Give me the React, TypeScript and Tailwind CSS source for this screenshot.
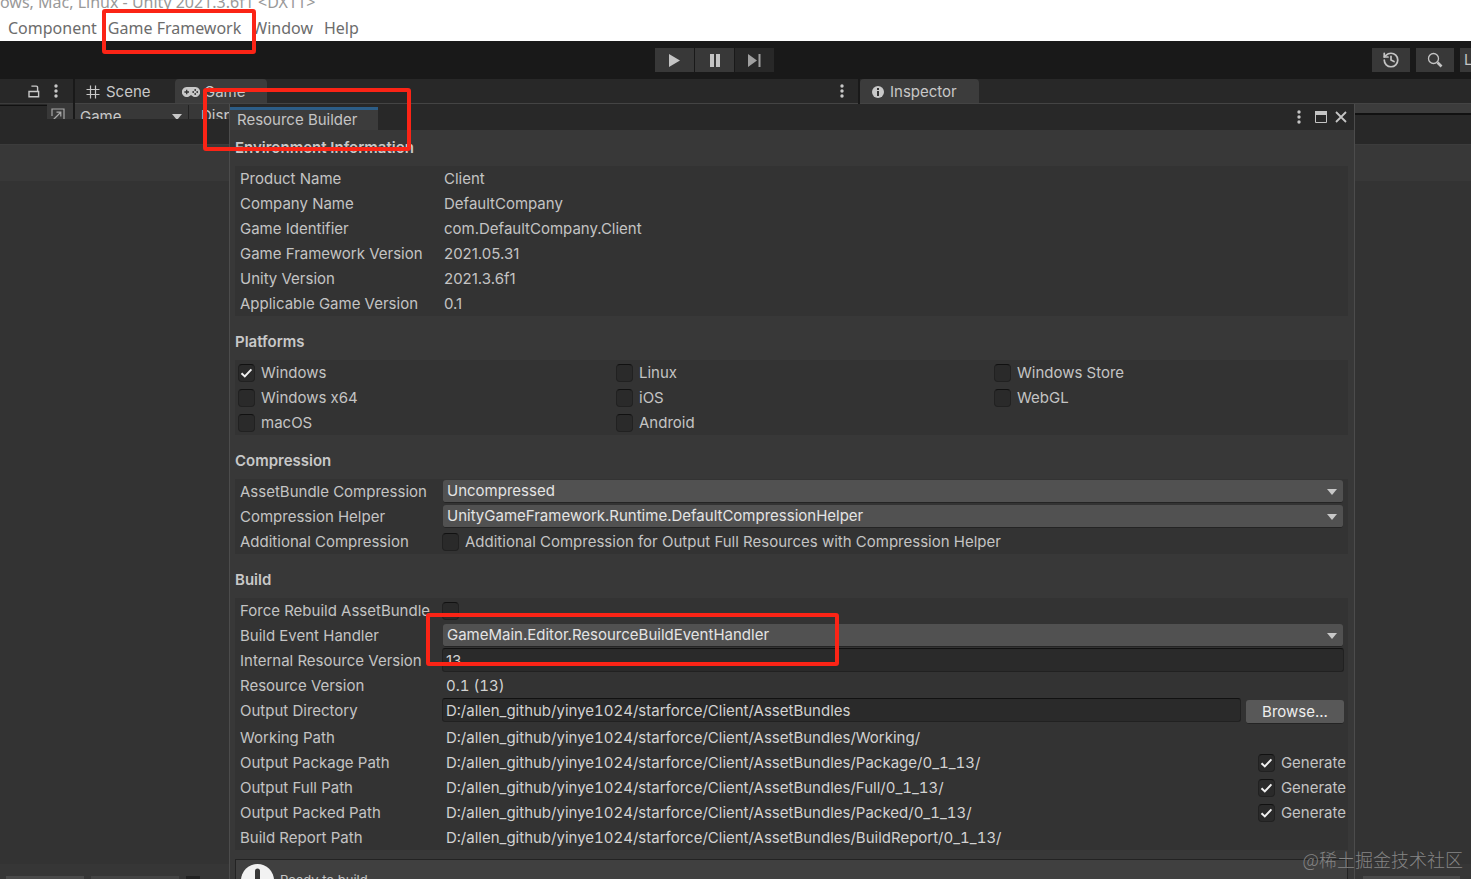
import type { ReactNode } from "react";
import { History } from "lucide-react";

const ROOT = "D:/allen_github/yinye1024/starforce/Client/AssetBundles";

const environment = [
  { label: "Product Name", value: "Client" },
  { label: "Company Name", value: "DefaultCompany" },
  { label: "Game Identifier", value: "com.DefaultCompany.Client" },
  { label: "Game Framework Version", value: "2021.05.31" },
  { label: "Unity Version", value: "2021.3.6f1" },
  { label: "Applicable Game Version", value: "0.1" },
];

const platforms = [
  { name: "Windows", checked: true },
  { name: "Windows x64", checked: false },
  { name: "macOS", checked: false },
  { name: "Linux", checked: false },
  { name: "iOS", checked: false },
  { name: "Android", checked: false },
  { name: "Windows Store", checked: false },
  { name: "WebGL", checked: false },
];

const paths = [
  { label: "Working Path", value: `${ROOT}/Working/`, generate: false },
  { label: "Output Package Path", value: `${ROOT}/Package/0_1_13/`, generate: true },
  { label: "Output Full Path", value: `${ROOT}/Full/0_1_13/`, generate: true },
  { label: "Output Packed Path", value: `${ROOT}/Packed/0_1_13/`, generate: true },
  { label: "Build Report Path", value: `${ROOT}/BuildReport/0_1_13/`, generate: false },
];

function DotsIcon() {
  return (
    <svg width="4" height="14" viewBox="0 0 4 14" fill="currentColor" aria-hidden="true">
      <circle cx="2" cy="2" r="1.7" />
      <circle cx="2" cy="7" r="1.7" />
      <circle cx="2" cy="12" r="1.7" />
    </svg>
  );
}

function LockIcon() {
  return (
    <svg width="12" height="13" viewBox="0 0 12 13" fill="none" stroke="currentColor" strokeWidth="1.4" aria-hidden="true">
      <path d="M1 6.5h9.6v5.3H1zM9.6 6.5V2.6c0-.9-.5-1.5-1.4-1.5H3.4" />
    </svg>
  );
}

function HashIcon() {
  return (
    <svg width="14" height="14" viewBox="0 0 14 14" stroke="currentColor" strokeWidth="1.2" aria-hidden="true">
      <path d="M4.5 0.5v13M9.5 0.5v13M0.5 4.5h13M0.5 9.5h13" />
    </svg>
  );
}

function GamepadIcon() {
  return (
    <svg width="18" height="10" viewBox="0 0 18 10" aria-hidden="true">
      <path d="M5 0a5 5 0 1 0 3.6 8.3h.8A5 5 0 1 0 13 0z" fill="currentColor" />
      <path d="M4.7 2.7v4.6M2.4 5H7" stroke="#333" strokeWidth="1.3" />
      <circle cx="13.2" cy="3" r="0.9" fill="#333" />
      <circle cx="15.2" cy="5" r="0.9" fill="#333" />
      <circle cx="13.2" cy="7" r="0.9" fill="#333" />
      <circle cx="11.2" cy="5" r="0.9" fill="#333" />
    </svg>
  );
}

function ArrowDown() {
  return (
    <svg width="10" height="6" viewBox="0 0 10 6" fill="#c8c8c8" aria-hidden="true">
      <path d="M0 0h10L5 6z" />
    </svg>
  );
}

function Check({ id, label, checked = false }: { id: string; label?: string; checked?: boolean }) {
  return (
    <span className="flex h-[25px] items-center gap-1.5 leading-[25px]">
      <span className="relative flex">
        <input
          id={id}
          type="checkbox"
          defaultChecked={checked}
          className="peer h-[18px] w-[17px] appearance-none rounded-sm border border-[#212121] border-t-[#111] bg-[#2a2a2a]"
        />
        <svg
          className="pointer-events-none absolute top-1 left-0.5 hidden peer-checked:block"
          width="13"
          height="10"
          viewBox="0 0 13 10"
          fill="none"
          stroke="#f0f0f0"
          strokeWidth="2"
          aria-hidden="true"
        >
          <path d="M1.5 5.2 4.8 8.4 11.4 1.4" />
        </svg>
      </span>
      {label && <label htmlFor={id}>{label}</label>}
    </span>
  );
}

function Dropdown({ id, value }: { id: string; value: string }) {
  return (
    <div className="relative mx-px mt-px flex-1">
      <select
        id={id}
        className="block h-[23px] w-full appearance-none rounded-[3px] border-b border-[#242424] bg-[#515151] pr-6 pl-1 leading-5 text-[#e4e4e4]"
      >
        <option>{value}</option>
      </select>
      <span className="pointer-events-none absolute top-[9px] right-1.5">
        <ArrowDown />
      </span>
    </div>
  );
}

function Section({ title, children }: { title: string; children: ReactNode }) {
  return (
    <section className="mb-[14px]">
      <h2 className="mb-1.5 leading-6 font-semibold text-[#c8c8c8]">{title}</h2>
      <div className="bg-[#333] pr-1 pl-[5px]">{children}</div>
    </section>
  );
}

function Row({ label, htmlFor, children }: { label: string; htmlFor?: string; children: ReactNode }) {
  return (
    <div className="flex min-h-[25px] items-start leading-[25px]">
      {htmlFor ? (
        <label htmlFor={htmlFor} className="w-[202px] shrink-0 whitespace-nowrap">{label}</label>
      ) : (
        <span className="w-[202px] shrink-0 whitespace-nowrap">{label}</span>
      )}
      {children}
    </div>
  );
}

function MenuBar() {
  return (
    <header className="h-[41px] overflow-hidden bg-white font-['Noto_Sans','Open_Sans',sans-serif] text-base whitespace-nowrap">
      <div className="-mt-2 h-5 leading-5 text-[#999]">ows, Mac, Linux - Unity 2021.3.6f1 &lt;DX11&gt;</div>
      <nav className="flex gap-[11px] pt-1 pl-2 leading-6 text-[#6c6c6c]">
        <button>Component</button>
        <button>Game Framework</button>
        <button>Window</button>
        <button>Help</button>
      </nav>
    </header>
  );
}

function Toolbar() {
  return (
    <div className="flex h-[38px] items-start bg-[#191919] pt-[7px]">
      <div className="flex-[655]" />
      <div className="flex gap-px">
        <button aria-label="Play" className="flex h-6 w-[39px] items-center justify-center bg-[#383838]">
          <svg width="11" height="13" viewBox="0 0 11 13" fill="#c4c4c4"><path d="M0 0l11 6.5L0 13z" /></svg>
        </button>
        <button aria-label="Pause" className="flex h-6 w-[39px] items-center justify-center bg-[#383838]">
          <svg width="10" height="13" viewBox="0 0 10 13" fill="#c4c4c4"><path d="M0 0h4v13H0zM6 0h4v13H6z" /></svg>
        </button>
        <button aria-label="Step" className="flex h-6 w-[39px] items-center justify-center bg-[#282828]">
          <svg width="13" height="13" viewBox="0 0 13 13" fill="#a0a0a0"><path d="M0 0l9 6.5L0 13zM10.5 0h2v13h-2z" /></svg>
        </button>
      </div>
      <div className="flex flex-[697] justify-end gap-1.5 text-[#c4c4c4]">
        <button aria-label="Undo history" className="flex h-6 w-[38px] items-center justify-center bg-[#383838]">
          <History size={18} strokeWidth={2.3} />
        </button>
        <button aria-label="Search" className="flex h-6 w-[38px] items-center justify-center bg-[#383838]">
          <svg width="16" height="16" viewBox="0 0 16 16" fill="none" stroke="currentColor">
            <circle cx="6.5" cy="6.5" r="5" strokeWidth="1.3" />
            <path d="M10.5 10.5l4 4" strokeWidth="2.6" />
          </svg>
        </button>
        <button className="h-6 w-[11px] overflow-hidden bg-[#383838] pl-1 text-left text-[15px] leading-6">L</button>
      </div>
    </div>
  );
}

function Docks() {
  return (
    <div className="flex h-10 gap-[2px] overflow-hidden bg-[#191919] text-[#c8c8c8]">
      <div className="w-[73px] bg-[#282828]">
        <div className="flex h-6 items-center justify-end gap-[14px] pr-[15px]">
          <LockIcon />
          <DotsIcon />
        </div>
        <div className="flex h-4 items-start justify-end border-t border-[#3c3c3c] bg-[#282828]">
          <div className="mt-px h-4 flex-1 border-t border-[#111]" />
          <div className="flex h-4 w-[26px] items-start bg-[#383838] pt-1 pl-1">
            <svg width="14" height="14" viewBox="0 0 14 14" fill="none" stroke="#a8a8a8" strokeWidth="1.2" aria-hidden="true">
              <path d="M1 8V1h12v12H8M4 10l5.5-5.5M5.5 4.2h4.3v4.3M1 13l3-3" />
            </svg>
          </div>
        </div>
      </div>

      <div className="flex-[783] overflow-hidden bg-[#282828]">
        <div className="flex h-6 items-center leading-6">
          <div className="flex h-6 w-[100px] items-center gap-1.5 pt-0.5 pl-[11px]">
            <HashIcon />
            Scene
          </div>
          <div className="flex h-6 w-[92px] items-center gap-1 rounded-t-sm bg-[#3c3c3c] pt-0.5 pl-[7px]">
            <GamepadIcon />
            Game
          </div>
          <div className="ml-auto pr-[14px]">
            <DotsIcon />
          </div>
        </div>
        <div className="flex h-[26px] items-center border-t border-[#444] bg-[#383838] pl-px">
          <div className="relative w-[113px] border-r border-[#222]">
            <select aria-label="View" className="block w-full appearance-none pl-1 leading-6">
              <option>Game</option>
            </select>
            <span className="pointer-events-none absolute top-[9px] right-1.5">
              <ArrowDown />
            </span>
          </div>
          <span className="pl-3">Display 1</span>
        </div>
      </div>

      <div className="flex-[611] bg-[#282828]">
        <div className="flex h-6 leading-6">
          <div className="flex h-6 w-[119px] items-center gap-1.5 rounded-t-sm bg-[#3c3c3c] pt-0.5 pl-3">
            <svg width="12" height="12" viewBox="0 0 12 12" aria-hidden="true">
              <circle cx="6" cy="6" r="6" fill="#c8c8c8" />
              <path d="M6 2v2M6 5v5" stroke="#333" strokeWidth="2" />
            </svg>
            Inspector
          </div>
        </div>
        <div className="h-3 border-t border-b-2 border-t-[#444] border-b-[#111] bg-[#3c3c3c]" />
      </div>
    </div>
  );
}

function ResourceBuilder() {
  return (
    <main className="absolute top-[104px] right-[116px] left-[229px] h-[900px] border-r border-l border-[#4c4c4c] bg-[#383838] text-[#c4c4c4]">
      <div className="flex h-[26px] items-end justify-between bg-[#282828]">
        <div className="h-[23px] w-[148px] border-t-3 border-[#2c5d87] bg-[#3c3c3c] pl-[7px] leading-5">
          Resource Builder
        </div>
        <div className="flex h-[26px] items-center gap-2 pr-[7px]">
          <button aria-label="Window menu" className="mr-1.5"><DotsIcon /></button>
          <button aria-label="Maximize">
            <svg width="12" height="12" viewBox="0 0 12 12" fill="none" stroke="currentColor">
              <path d="M.5.5h11v11H.5z" />
              <path d="M0 2h12" strokeWidth="4" />
            </svg>
          </button>
          <button aria-label="Close">
            <svg width="12" height="12" viewBox="0 0 12 12" stroke="currentColor" strokeWidth="1.8">
              <path d="M1 1l10 10M11 1L1 11" />
            </svg>
          </button>
        </div>
      </div>

      <div className="pt-1.5 pr-1.5 pl-[5px]">
        <Section title="Environment Information">
          {environment.map((item) => (
            <Row key={item.label} label={item.label}>
              <span className="pl-0.5">{item.value}</span>
            </Row>
          ))}
        </Section>

        <Section title="Platforms">
          <div className="-ml-0.5 grid grid-flow-col grid-cols-3 grid-rows-3 gap-x-7">
            {platforms.map((platform) => (
              <Check key={platform.name} id={platform.name} label={platform.name} checked={platform.checked} />
            ))}
          </div>
        </Section>

        <Section title="Compression">
          <Row label="AssetBundle Compression" htmlFor="bundle-compression">
            <Dropdown id="bundle-compression" value="Uncompressed" />
          </Row>
          <Row label="Compression Helper" htmlFor="compression-helper">
            <Dropdown id="compression-helper" value="UnityGameFramework.Runtime.DefaultCompressionHelper" />
          </Row>
          <Row label="Additional Compression">
            <Check id="additional" label="Additional Compression for Output Full Resources with Compression Helper" />
          </Row>
        </Section>

        <Section title="Build">
          <Row label="Force Rebuild AssetBundle" htmlFor="force-rebuild">
            <Check id="force-rebuild" />
          </Row>
          <Row label="Build Event Handler" htmlFor="event-handler">
            <Dropdown id="event-handler" value="GameMain.Editor.ResourceBuildEventHandler" />
          </Row>
          <Row label="Internal Resource Version" htmlFor="resource-version">
            <input
              id="resource-version"
              defaultValue="13"
              className="h-6 flex-1 rounded-[3px] border border-[#212121] border-t-[#111] bg-[#2a2a2a] px-[3px] text-[#d2d2d2]"
            />
          </Row>
          <Row label="Resource Version">
            <span className="pl-1 text-[#d2d2d2] tabular-nums">0.1 (13)</span>
          </Row>
          <Row label="Output Directory" htmlFor="output-directory">
            <input
              id="output-directory"
              defaultValue={ROOT}
              className="h-6 flex-1 rounded-[3px] border border-[#212121] border-t-[#111] bg-[#2a2a2a] px-[3px] text-[#d2d2d2] tabular-nums"
            />
            <button className="mt-0.5 mb-px ml-[5px] h-6 w-[98px] rounded-[3px] border-b border-[#242424] bg-[#585858] leading-6 text-[#eee]">
              Browse...
            </button>
          </Row>
          {paths.map((path) => (
            <Row key={path.label} label={path.label}>
              <span className="pl-1 text-[#d2d2d2] tabular-nums">{path.value}</span>
              {path.generate && (
                <span className="-mr-0.5 ml-auto">
                  <Check id={`${path.label} generate`} label="Generate" checked />
                </span>
              )}
            </Row>
          ))}
        </Section>

        <div className="-mt-[5px] flex items-center gap-1.5 border border-[#232323] bg-[#404040] px-[5px] py-1">
          <svg width="33" height="33" viewBox="0 0 33 33" aria-hidden="true">
            <circle cx="16.5" cy="16.5" r="16.5" fill="#f2f2f2" />
            <path d="M16.5 7v11" stroke="#383838" strokeWidth="5" strokeLinecap="round" />
            <circle cx="16.5" cy="25" r="2.8" fill="#383838" />
          </svg>
          <p className="text-[13px]">Ready to build.</p>
        </div>
      </div>
    </main>
  );
}

export default function App() {
  return (
    <div className="relative flex h-screen flex-col overflow-hidden bg-[#333] font-[Inter,sans-serif] text-[15px]">
      <MenuBar />
      <Toolbar />
      <Docks />
      <div className="h-[26px] shrink-0 border-b border-[#3c3c3c] bg-[#282828]" />
      <div className="h-9 shrink-0 bg-[#383838]" />
      <footer className="mt-auto flex h-[15px] items-end gap-[7px] bg-[#363636] px-1.5">
        <div className="h-[3px] w-[78px] bg-[#4a4a4a]" />
        <div className="h-[3px] w-[88px] bg-[#444]" />
        <div className="h-[3px] w-[14px] bg-[#222]" />
        <div className="mr-[5px] ml-auto h-[3px] w-[97px] bg-[#4a4a4a]" />
      </footer>

      <ResourceBuilder />

      {/* highlighted steps */}
      <div className="pointer-events-none absolute top-[9px] left-[102px] h-[45px] w-[154px] rounded-[3px] border-4 border-[#fb2416]" />
      <div className="pointer-events-none absolute top-[88px] left-[203px] h-[63px] w-[208px] rounded-[3px] border-4 border-[#fb2416]" />
      <div className="pointer-events-none absolute top-[613px] left-[426px] h-[53px] w-[413px] rounded-[3px] border-4 border-[#fb2416]" />

      <div className="absolute right-2 bottom-2 font-['Noto_Sans_CJK_SC',sans-serif] text-[18px] leading-6 font-light text-[#858585]">
        @稀土掘金技术社区
      </div>
    </div>
  );
}
